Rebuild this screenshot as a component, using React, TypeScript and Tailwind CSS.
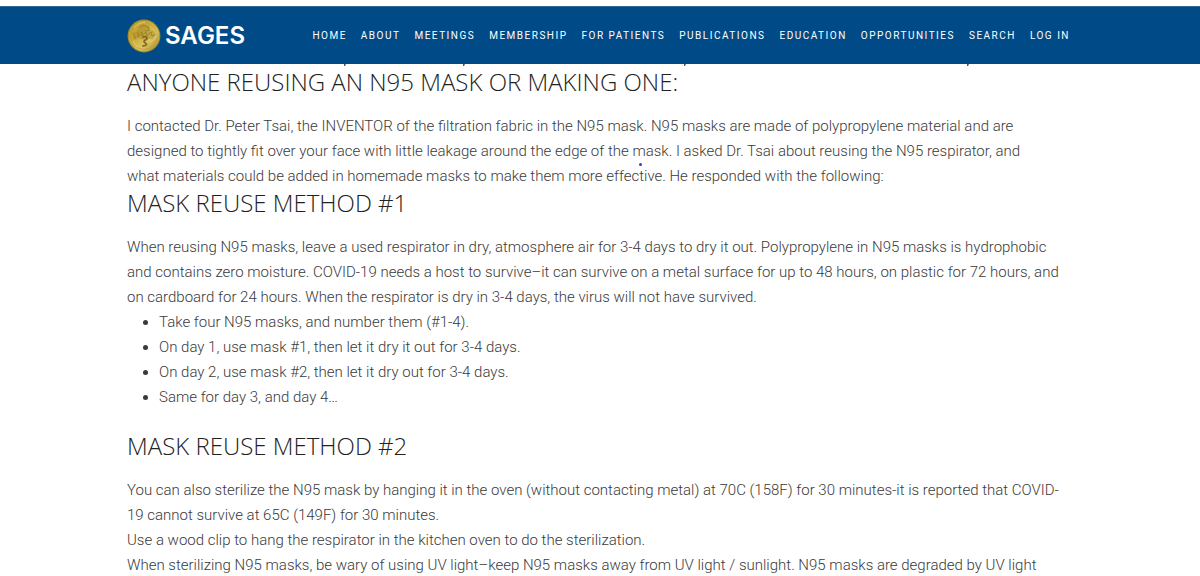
import React from 'react';

const links = [
  'Home', 'About', 'Meetings', 'Membership', 'For Patients',
  'Publications', 'Education', 'Opportunities', 'Search', 'Log In',
];

function Coin() {
  return (
    <svg viewBox="0 0 34 34" className="size-[34px] shrink-0" aria-hidden="true">
      <defs>
        <linearGradient id="gold" x1="0" y1="0" x2="1" y2="1">
          <stop offset="0" stopColor="#b99a2c" />
          <stop offset="0.4" stopColor="#cbae3c" />
          <stop offset="0.65" stopColor="#dcc765" />
          <stop offset="1" stopColor="#a28222" />
        </linearGradient>
      </defs>
      <circle cx="17" cy="17" r="16.4" fill="#a88b2b" />
      <circle cx="17" cy="17" r="15.2" fill="url(#gold)" />
      <circle cx="17" cy="17" r="13.4" fill="none" stroke="#b3973a" strokeWidth="0.6" />
      <path d="M6 14l4-2 2-4 4-3 6 2 1 4 4 1 2 4-3 4-6 0-3 1-6-2-5 2z" fill="#a98c2c" opacity="0.5" />
      <g fill="none" stroke="#8c7222" strokeLinecap="round" strokeLinejoin="round" opacity="0.6">
        <path d="M13 8l4-2 4 2 1 3-4 1M6 14l3 6M11 13l0 5 4-5 0 4 4-4 1 4 4-4 1 4 3-1" strokeWidth="1" />
      </g>
      <path d="M16 18c2-1 4 0 4 1.500s-3 1.500-3 3 3 1.500 2.500 3-2.500 1-3.500 1.500" fill="none" stroke="#85691b" strokeWidth="1.800" strokeLinecap="round" />
      <path d="M7 9c3-4 7-5.500 11-5.500M23 23c3-1 5-4 6-7M6 22c1 3 3 5 5 6" fill="none" stroke="#e5d47d" strokeWidth="0.9" />
    </svg>
  );
}

function Heading({ children }: { children: React.ReactNode }) {
  return (
    <h2 className="font-['Open_Sans',sans-serif] text-[24px] leading-7 font-light text-[#222]">
      {children}
    </h2>
  );
}

export default function App() {
  return (
    <div className="relative min-h-screen bg-white pt-[6px] font-[Roboto,sans-serif]">
      <header className="border-t border-[#2f6a95] bg-[#004b87]">
        <div className="mx-auto flex h-[57px] w-[79%] items-center justify-between">
          <a href="#" className="flex items-center gap-1 pl-px text-white">
            <Coin />
            <span className="pt-px font-[Inter,sans-serif] text-[24px] leading-7 font-semibold">SAGES</span>
          </a>
          <nav className="flex gap-[14px] pt-px pr-1" aria-label="Main">
            {links.map((l) => (
              <a key={l} href="#" className="text-[10px] leading-4 tracking-[0.15em] whitespace-nowrap text-white uppercase">
                {l}
              </a>
            ))}
          </nav>
        </div>
      </header>
      <svg className="block h-[2px] w-full" viewBox="0 0 1200 2" preserveAspectRatio="none" aria-hidden="true">
        <path d="M344 0h2l-1 2h-1zM463 0h2l-1 2h-1zM684 0h2l-1 2h-1zM967 0h2l-1 2h-1z" fill="#555" />
      </svg>

      <main className="mx-auto w-[79%] pl-px text-[15px] leading-[25px] font-light text-[#3a3a3a]">
        <section className="pt-[2px]">
          <Heading>ANYONE REUSING AN N95 MASK OR MAKING ONE:</Heading>
          <p className="mt-[18px]">
            I contacted Dr. Peter Tsai, the INVENTOR of the filtration fabric in the N95 mask. N95 masks are made of polypropylene material and are<br />
            designed to tightly fit over your face with little leakage around the edge of the mask. I asked Dr. Tsai about reusing the N95 respirator, and<br />
            what materials could be added in homemade masks to make them more effective. He responded with the following:
          </p>
        </section>
        <section>
          <Heading>MASK REUSE METHOD #1</Heading>
          <p className="mt-[18px]">
            When reusing N95 masks, leave a used respirator in dry, atmosphere air for 3-4 days to dry it out. Polypropylene in N95 masks is hydrophobic<br />
            and contains zero moisture. COVID-19 needs a host to survive–it can survive on a metal surface for up to 48 hours, on plastic for 72 hours, and<br />
            on cardboard for 24 hours. When the respirator is dry in 3-4 days, the virus will not have survived.
          </p>
          <ul className="list-disc pl-8">
            <li>Take four N95 masks, and number them (#1-4).</li>
            <li>On day 1, use mask #1, then let it dry it out for 3-4 days.</li>
            <li>On day 2, use mask #2, then let it dry out for 3-4 days.</li>
            <li>Same for day 3, and day 4…</li>
          </ul>
        </section>
        <section className="pt-[22px]">
          <Heading>MASK REUSE METHOD #2</Heading>
          <p className="mt-[18px]">
            You can also sterilize the N95 mask by hanging it in the oven (without contacting metal) at 70C (158F) for 30 minutes-it is reported that COVID-<br />
            19 cannot survive at 65C (149F) for 30 minutes.
          </p>
          <p>Use a wood clip to hang the respirator in the kitchen oven to do the sterilization.</p>
          <p>When sterilizing N95 masks, be wary of using UV light–keep N95 masks away from UV light / sunlight. N95 masks are degraded by UV light</p>
        </section>
      </main>
      <span className="absolute top-[163px] left-[639px] size-[3px] rounded-full bg-[#3a36d0]" aria-hidden="true" />
    </div>
  );
}
